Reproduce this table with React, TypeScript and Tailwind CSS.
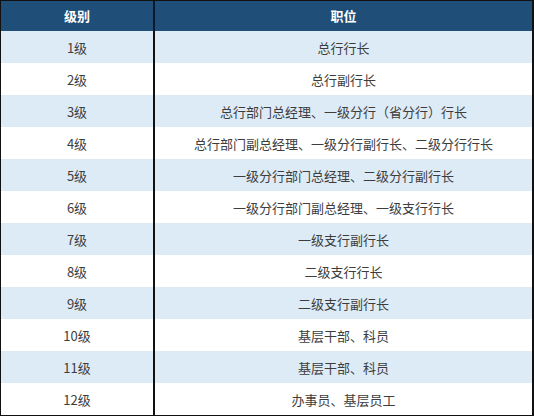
import React from "react";

const rows: [string, string][] = [
  ["1级", "总行行长"],
  ["2级", "总行副行长"],
  ["3级", "总行部门总经理、一级分行（省分行）行长"],
  ["4级", "总行部门副总经理、一级分行副行长、二级分行行长"],
  ["5级", "一级分行部门总经理、二级分行副行长"],
  ["6级", "一级分行部门副总经理、一级支行行长"],
  ["7级", "一级支行副行长"],
  ["8级", "二级支行行长"],
  ["9级", "二级支行副行长"],
  ["10级", "基层干部、科员"],
  ["11级", "基层干部、科员"],
  ["12级", "办事员、基层员工"],
];

export default function App() {
  return (
    <div
      className="w-[534px] h-[417px] bg-white"
      style={{ fontFamily: '"Microsoft YaHei", "Noto Sans CJK SC", "Noto Sans", sans-serif' }}
    >
      <div className="w-[534px] border-t border-l border-r-2 border-b border-[#111]">
        <div className="flex h-[30px] bg-[#1f4e79] text-white font-bold text-[13px]">
          <div className="w-[154px] flex items-center justify-center border-r-2 border-[#0a1a2e]">级别</div>
          <div className="flex-1 flex items-center justify-center">职位</div>
        </div>
        {rows.map(([a, b], i) => (
          <div
            key={a}
            className={`flex h-[32px] text-[13px] text-[#3d3d3d] ${i % 2 === 0 ? "bg-[#ddebf7]" : "bg-white"}`}
          >
            <div className="w-[154px] flex items-center justify-center pt-[2px] border-r-2 border-[#111]">{a}</div>
            <div className="flex-1 flex items-center justify-center pt-[2px]">{b}</div>
          </div>
        ))}
      </div>
    </div>
  );
}
